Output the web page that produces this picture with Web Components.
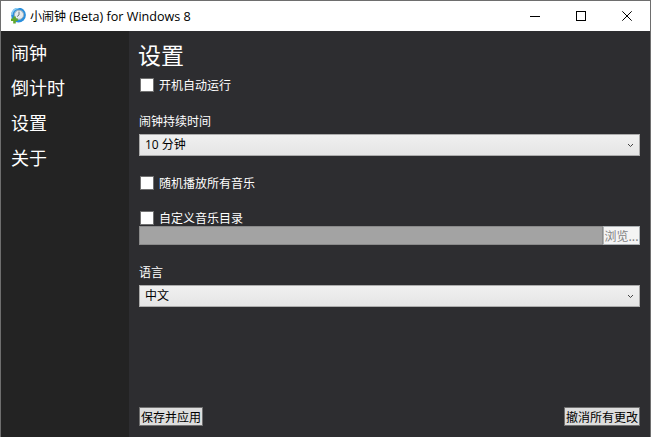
<!DOCTYPE html>
<html lang="zh">
<head>
<meta charset="utf-8">
<title>小闹钟</title>
<style>
  html, body { margin: 0; padding: 0; height: 100%; overflow: hidden; background: #2d2d30; }
  body { font-family: "Open Sans", "Noto Sans CJK SC", sans-serif; font-size: 12px; }
</style>
</head>
<body>
<app-window>
  <title-bar slot="title">小闹钟 <span style="font-size:12.6px">(Beta) for Windows 8</span></title-bar>
  <side-nav slot="nav">
    <nav-item>闹钟</nav-item>
    <nav-item>倒计时</nav-item>
    <nav-item>设置</nav-item>
    <nav-item>关于</nav-item>
  </side-nav>
  <settings-page>
    <check-row style="margin-top:7px">开机自动运行</check-row>
    <field-label style="margin-top:20px">闹钟持续时间</field-label>
    <drop-down style="margin-top:5px">10 分钟</drop-down>
    <check-row style="margin-top:19px">随机播放所有音乐</check-row>
    <check-row style="margin-top:19px">自定义音乐目录</check-row>
    <path-input></path-input>
    <field-label style="margin-top:19px">语言</field-label>
    <drop-down style="margin-top:5px">中文</drop-down>
    <footer-row slot="footer">
      <push-button>保存并应用</push-button>
      <push-button>撤消所有更改</push-button>
    </footer-row>
  </settings-page>
</app-window>

<script>
function define(name, html) {
  customElements.define(name, class extends HTMLElement {
    constructor() {
      super();
      this.attachShadow({ mode: "open" }).innerHTML = html;
    }
  });
}

const CJK = `"Noto Sans CJK SC", sans-serif`;

define("app-window", `
  <style>
    :host {
      display: flex;
      flex-direction: column;
      box-sizing: border-box;
      width: 651px;
      height: 437px;
      border: 1px solid #6e6e6e;
      border-bottom: none;
      background: #2d2d30;
    }
    .body { flex: 1; display: flex; min-height: 0; }
  </style>
  <slot name="title"></slot>
  <div class="body">
    <slot name="nav"></slot>
    <slot></slot>
  </div>
`);

define("title-bar", `
  <style>
    :host {
      display: flex;
      align-items: center;
      height: 30px;
      flex: none;
      background: #fff;
      color: #000;
      font: 12px "Open Sans", ${CJK};
    }
    .logo { width: 16px; height: 16px; margin: 0 4px 0 9px; flex: none; }
    .text { flex: 1; white-space: nowrap; }
    .btn { width: 46px; height: 30px; display: flex; align-items: center; justify-content: center; }
    svg { display: block; }
  </style>
  <svg class="logo" viewBox="0 0 16 16">
    <circle cx="8.500" cy="7" r="7.400" fill="#2a8fdc"/>
    <path d="M1.800 7a6.700 6.700 0 0 1 6.700-6.700" fill="none" stroke="#8fd0f5" stroke-width="1.500"/>
    <circle cx="9" cy="6.800" r="4.600" fill="#e6ebee" stroke="#9fb0bb" stroke-width="1"/>
    <path d="M9 3.600V7l-2 1.600" fill="none" stroke="#6b7780" stroke-width="1"/>
    <path d="M3.200 8.500h2.600v2h2v2.500h-2v2.500H3.200V13H1v-2.500h2.200z" fill="#62a82c"/>
  </svg>
  <span class="text"><slot></slot></span>
  <span class="btn"><svg width="10" height="10" viewBox="0 0 10 10"><path d="M0 5.500h10" stroke="#000" stroke-width="1"/></svg></span>
  <span class="btn"><svg width="10" height="10" viewBox="0 0 10 10"><rect x=".5" y=".5" width="9" height="9" fill="none" stroke="#000"/></svg></span>
  <span class="btn"><svg width="10" height="10" viewBox="0 0 10 10"><path d="M.3 .3l9.400 9.400M9.700 .3L.3 9.700" stroke="#000" stroke-width="1" fill="none"/></svg></span>
`);

define("side-nav", `
  <style>
    :host {
      display: flex;
      flex-direction: column;
      flex: none;
      width: 128px;
      height: 100%;
      padding-top: 4px;
      box-sizing: border-box;
      background: #232323;
    }
  </style>
  <slot></slot>
`);

define("nav-item", `
  <style>
    :host {
      display: block;
      height: 35px;
      padding-left: 10px;
      color: #fff;
      font: 18px/35px ${CJK};
    }
  </style>
  <slot></slot>
`);

define("settings-page", `
  <style>
    :host {
      display: flex;
      flex-direction: column;
      flex: 1;
      min-width: 0;
      box-sizing: border-box;
      padding: 7px 10px 11px 10px;
      color: #fff;
    }
    h1 { margin: 0 0 0 -1px; font: 400 23px/32px ${CJK}; color: #fff; }
    .foot { margin-top: auto; }
  </style>
  <h1>设置</h1>
  <slot></slot>
  <div class="foot"><slot name="footer"></slot></div>
`);

define("check-row", `
  <style>
    :host {
      display: flex;
      align-items: center;
      height: 16px;
      color: #fff;
      font: 12px/16px ${CJK};
    }
    .box {
      box-sizing: border-box;
      width: 14px;
      height: 14px;
      margin: 0 5px 0 1px;
      background: #fff;
      border: 1px solid #707070;
      flex: none;
    }
  </style>
  <span class="box"></span><slot></slot>
`);

define("field-label", `
  <style>
    :host { display: block; color: #fff; font: 12px/16px ${CJK}; }
  </style>
  <slot></slot>
`);

define("drop-down", `
  <style>
    :host {
      display: flex;
      align-items: center;
      box-sizing: border-box;
      height: 22px;
      padding: 0 5px;
      border: 1px solid #acacac;
      background: linear-gradient(#f0f0f0, #e5e5e5);
      color: #000;
      font: 12px/20px "Open Sans", ${CJK};
    }
    .text { flex: 1; }
    svg { display: block; }
  </style>
  <span class="text"><slot></slot></span>
  <svg width="7" height="5" viewBox="0 0 7 5"><path d="M1 1l2.500 2.500L6 1" fill="none" stroke="#444" stroke-width="1"/></svg>
`);

define("path-input", `
  <style>
    :host { display: flex; height: 19px; }
    .field {
      flex: 1;
      box-sizing: border-box;
      background: #a3a3a3;
      border: 1px solid #8a8a8a;
    }
    .browse {
      box-sizing: border-box;
      width: 37px;
      background: #f4f4f4;
      border: 1px solid #adb2b5;
      color: #838383;
      font: 12px/17px ${CJK};
      white-space: nowrap;
      overflow: hidden;
      text-align: center;
    }
  </style>
  <div class="field"></div>
  <div class="browse">浏览...</div>
`);

define("footer-row", `
  <style>
    :host { display: flex; justify-content: space-between; }
  </style>
  <slot></slot>
`);

define("push-button", `
  <style>
    :host {
      display: block;
      box-sizing: border-box;
      height: 19px;
      padding: 0 1px;
      border: 1px solid #707070;
      background: #dddddd;
      color: #000;
      font: 12px/17px ${CJK};
      white-space: nowrap;
    }
  </style>
  <slot></slot>
`);
</script>
</body>
</html>
